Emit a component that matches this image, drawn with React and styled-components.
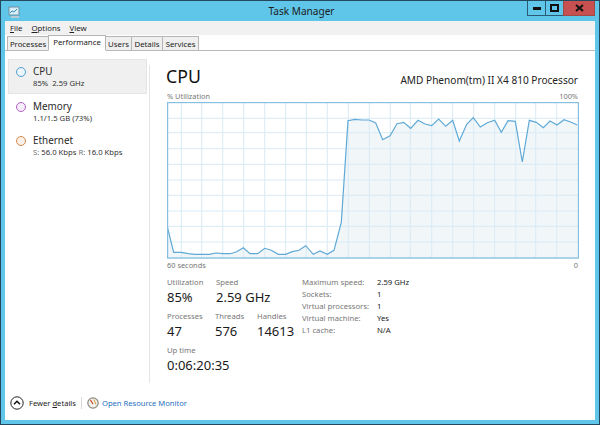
import React from 'react';
import styled, { createGlobalStyle } from 'styled-components';

const Global = createGlobalStyle`
  html, body { margin: 0; padding: 0; background: #5fc6e9; }
  body { font-family: "Noto Sans", "Open Sans", sans-serif; width: 600px; height: 425px; overflow: hidden; }
  * { box-sizing: border-box; }
`;
const Frame = styled.div`
  width: 600px; height: 425px; display: flex; flex-direction: column;
  background: #5fc6e9; border: 1px solid #24495f; overflow: hidden;
`;
const TitleBar = styled.div`
  height: 20px; flex: none; display: grid; grid-template-columns: 1fr auto 1fr; padding: 0 4px 0 7px;
`;
const AppIcon = styled.svg`width: 13px; height: 13px; margin-top: 5px; display: block;`;
const Title = styled.div`
  font-size: 10.1px; line-height: 20px; color: #1c1c1c; padding-top: 0;
`;
const WinButtons = styled.div`display: flex; justify-content: flex-end; align-items: flex-start;`;
const WinButton = styled.div`
  width: ${p => p.$w}px; height: 15px; display: flex; align-items: center; justify-content: center;
  background: ${p => p.$close ? '#c75050' : 'transparent'};
  border: 1px solid ${p => p.$close ? '#9f4a44' : '#2c5a75'}; border-top: none;
  margin-left: -1px;
`;
const Client = styled.div`
  flex: 1; margin: 0 4px 4px; background: #fff; display: flex; flex-direction: column; min-height: 0;
`;
const MenuBar = styled.div`
  height: 14px; flex: none; display: flex; gap: 9px; padding-left: 5px; background: #f1f1f1;
  font-size: 7.8px; line-height: 14px; color: #222;
  span::first-letter { text-decoration: underline; }
`;
const MenuItem = styled.span`display: inline-block;`;
const TabStrip = styled.div`
  height: 16px; flex: none; display: flex; align-items: flex-end; padding-left: 3px; background: #fff;
  border-bottom: 1px solid #b9b9b9;
`;
const Tab = styled.div`
  height: ${p => p.$active ? 16 : 14}px; font-size: 7.8px;
  line-height: ${p => p.$active ? 12 : 14}px; color: #222; text-align: center;
  background: ${p => p.$active ? '#fff' : '#efefef'};
  border: 1px solid #b5b5b5; border-bottom: ${p => p.$active ? '1px solid #fff' : 'none'};
  margin-left: -1px; margin-bottom: ${p => p.$active ? -1 : 0}px;
  width: ${p => p.$w}px; white-space: nowrap; position: relative;
  z-index: ${p => p.$active ? 1 : 0};
`;
const Body = styled.div`flex: 1; display: flex; min-height: 0;`;
const Side = styled.div`
  width: 144px; flex: none; padding: 8px 0 0 3px;
  display: flex; flex-direction: column;
`;
const SideItem = styled.div`
  width: 139px; height: 34.5px; flex: none; display: flex; padding: 4px 0 0 7px;
  background: ${p => p.$on ? '#f0f0f0' : 'transparent'};
  border: 1px solid ${p => p.$on ? '#e4e4e4' : 'transparent'};
`;
const Dot = styled.div`
  width: 10px; height: 10px; border-radius: 50%; margin: 3px 7px 0 0; flex: none;
  border: 1.3px solid ${p => p.$c}; background: ${p => p.$f};
`;
const SideText = styled.div`display: flex; flex-direction: column;`;
const SideName = styled.div`font-size: 9.9px; line-height: 14px; color: #2a2a2a;`;
const SideSub = styled.div`font-size: 7.7px; line-height: 11px; color: #333; white-space: pre;`;
const Dim = styled.span`color: #777;`;
const Main = styled.div`
  flex: 1; padding: 0 17px; margin-top: 14px; margin-bottom: 3px; border-left: 1px solid #e4e4e4; display: flex; flex-direction: column; min-width: 0;
`;
const Head = styled.div`display: flex; justify-content: space-between; align-items: flex-end; height: 22px;`;
const H1 = styled.div`font-size: 17.7px; line-height: 22px; color: #111; margin-left: -1px;`;
const Proc = styled.div`font-size: 10.1px; line-height: 14px; color: #222; padding-bottom: 0;`;
const AxisRow = styled.div`
  display: flex; justify-content: space-between; font-size: 7.4px; line-height: 10px; color: #777; margin-top: ${p => p.$top}px;
  height: 11px;
`;
const Chart = styled.svg`display: block; width: 412px; height: 157px; flex: none;`;
const StatsRow = styled.div`display: flex; margin-top: 5px;`;
const Stats = styled.div`width: 135px; flex: none; display: flex; flex-direction: column; gap: 4px;`;
const StatLine = styled.div`display: flex;`;
const Stat = styled.div`width: ${p => p.$w || 48}px; flex: none;`;
const Label = styled.div`font-size: 7.7px; line-height: 12px; color: #777; white-space: nowrap;`;
const Value = styled.div`font-size: 13px; line-height: 18px; color: #1a1a1a; white-space: nowrap;`;
const KV = styled.div`display: grid; grid-template-columns: 75px auto; grid-auto-rows: 12px; font-size: 7.7px; line-height: 12px; align-content: start;`;
const K = styled.div`color: #777; white-space: nowrap;`;
const V = styled.div`color: #222; white-space: nowrap;`;
const Footer = styled.div`
  height: 36px; flex: none; display: flex; align-items: center; padding: 2px 0 0 5px; font-size: 7.6px; color: #222; margin-top: -2px;
`;
const Chevron = styled.svg`width: 14px; height: 14px; display: block; margin-right: 5px;`;
const Divider = styled.div`width: 1px; height: 12px; background: #d8d8d8; margin: 0 5px 0 5px;`;
const Gauge = styled.svg`width: 12px; height: 12px; display: block; margin-right: 3px;`;
const Link = styled.span`color: #1f70c0;`;
const Und = styled.span`text-decoration: underline;`;

const xs = [181.3,201.7,222.7,243.7,264.7,285.7,306.3,327.3,348.3,369.3,390.3,410.3,431.7,452.7,473.7,494.7,515.7,535.7,556.7];
const ys = [118.3,132.7,148.7,164.3,180,195.3,211,226.3,242];
const left = [[52,410],[71,487],[94,487],[115,491],[135,493],[157,493],[179,493],[198,489],[218,491],[241,491],[260,485],[280,473],[300,491],[323,491],[344,475],[364,481],[385,493],[407,493],[427,485],[447,481],[467,467],[490,493],[510,483],[532,493],[552,481],[574,397]].map(([x,y]) => [150+x/3, 90+y/3]);
const right = [[24,62],[45,58],[66,60],[87,60],[107,69],[128,119],[150,107],[171,71],[191,67],[212,85],[234,61],[255,72],[275,77],[296,57],[317,79],[338,61],[358,123],[380,73],[400,53],[421,81],[442,68],[464,61],[484,97],[504,62],[526,64],[547,186],[568,61],[589,67],[610,83],[630,63],[651,75],[672,59],[692,66],[712,75]].map(([x,y]) => [340+x/3, 100+y/3]);
const pts = [...left, ...right];
const line = pts.map(p => p.map(n => n.toFixed(1)).join(',')).join(' ');
const area = `167.5,257 ${line} 577.5,257`;

export default function App() {
  return (
    <Frame>
      <Global />
      <TitleBar>
        <AppIcon viewBox="0 0 13 13">
          <rect x="1" y="1" width="10" height="8" fill="#d8eef7" stroke="#6f8fa3" />
          <path d="M2 7l2-2 2 1 3-3" fill="none" stroke="#3a87b8" />
          <rect x="3" y="10" width="8" height="2" fill="#b9cdd8" />
        </AppIcon>
        <Title>Task Manager</Title>
        <WinButtons>
          <WinButton $w={19}>
            <svg width="8" height="3"><rect width="8" height="3" fill="#111" /></svg>
          </WinButton>
          <WinButton $w={19}>
            <svg width="9" height="8"><rect x="1" y="1" width="7" height="6" fill="none" stroke="#111" strokeWidth="2" /></svg>
          </WinButton>
          <WinButton $w={32} $close>
            <svg width="9" height="8"><path d="M1 1l7 6M8 1l-7 6" stroke="#111" strokeWidth="2" /></svg>
          </WinButton>
        </WinButtons>
      </TitleBar>
      <Client>
        <MenuBar>
          <MenuItem>File</MenuItem>
          <MenuItem>Options</MenuItem>
          <MenuItem>View</MenuItem>
        </MenuBar>
        <TabStrip>
          <Tab $w={42}>Processes</Tab>
          <Tab $w={58} $active>Performance</Tab>
          <Tab $w={27}>Users</Tab>
          <Tab $w={32}>Details</Tab>
          <Tab $w={37}>Services</Tab>
        </TabStrip>
        <Body>
          <Side>
            <SideItem $on>
              <Dot $c="#4f9fd3" $f="#eaf4fa" />
              <SideText>
                <SideName>CPU</SideName>
                <SideSub>85%  2.59 GHz</SideSub>
              </SideText>
            </SideItem>
            <SideItem>
              <Dot $c="#b060c8" $f="#f6eef9" />
              <SideText>
                <SideName>Memory</SideName>
                <SideSub>1.1/1.5 GB (73%)</SideSub>
              </SideText>
            </SideItem>
            <SideItem>
              <Dot $c="#d98a4a" $f="#fbf1e8" />
              <SideText>
                <SideName>Ethernet</SideName>
                <SideSub><Dim>S:</Dim> 56.0 Kbps <Dim>R:</Dim> 16.0 Kbps</SideSub>
              </SideText>
            </SideItem>
          </Side>
          <Main>
            <Head>
              <H1>CPU</H1>
              <Proc>AMD Phenom(tm) II X4 810 Processor</Proc>
            </Head>
            <AxisRow $top={4}><span>% Utilization</span><span>100%</span></AxisRow>
            <Chart viewBox="167 102 412 157">
              <rect x="167" y="102" width="412" height="157" fill="#fff" />
              <polygon points={area} fill="#f1f6f9" />
              {xs.map(x => <line key={x} x1={x} x2={x} y1="102" y2="258" stroke="#d9ebf6" strokeWidth="1" />)}
              {ys.map(y => <line key={y} y1={y} y2={y} x1="167" x2="578" stroke="#d9ebf6" strokeWidth="1" />)}
              <polyline points={line} fill="none" stroke="#5fa9d6" strokeWidth="1.2" />
              <rect x="167.5" y="102.5" width="411" height="155.5" fill="none" stroke="#86bfdf" strokeWidth="1.4" />
            </Chart>
            <AxisRow $top={1}><span>60 seconds</span><span>0</span></AxisRow>
            <StatsRow>
              <Stats>
                <StatLine>
                  <Stat $w={49}><Label>Utilization</Label><Value>85%</Value></Stat>
                  <Stat><Label>Speed</Label><Value>2.59 GHz</Value></Stat>
                </StatLine>
                <StatLine>
                  <Stat $w={48}><Label>Processes</Label><Value>47</Value></Stat>
                  <Stat $w={42}><Label>Threads</Label><Value>576</Value></Stat>
                  <Stat><Label>Handles</Label><Value>14613</Value></Stat>
                </StatLine>
                <StatLine>
                  <Stat><Label>Up time</Label><Value>0:06:20:35</Value></Stat>
                </StatLine>
              </Stats>
              <KV>
                <K>Maximum speed:</K><V>2.59 GHz</V>
                <K>Sockets:</K><V>1</V>
                <K>Virtual processors:</K><V>1</V>
                <K>Virtual machine:</K><V>Yes</V>
                <K>L1 cache:</K><V>N/A</V>
              </KV>
            </StatsRow>
          </Main>
        </Body>
        <Footer>
          <Chevron viewBox="0 0 14 14">
            <circle cx="7" cy="7" r="6.2" fill="#fff" stroke="#222" strokeWidth="1" />
            <path d="M4 8.3L7 5.3l3 3" fill="none" stroke="#111" strokeWidth="1.5" />
          </Chevron>
          <span>Fewer <Und>d</Und>etails</span>
          <Divider />
          <Gauge viewBox="0 0 12 12">
            <circle cx="6" cy="6" r="5.2" fill="#f3efe9" stroke="#8a8a80" strokeWidth="1.2" />
            <path d="M3.5 3L6 7" stroke="#c8482f" strokeWidth="1.3" />
            <path d="M7 2.5l2 5" stroke="#c9a24a" strokeWidth="1" />
          </Gauge>
          <Link>Open Resource Monitor</Link>
        </Footer>
      </Client>
    </Frame>
  );
}
